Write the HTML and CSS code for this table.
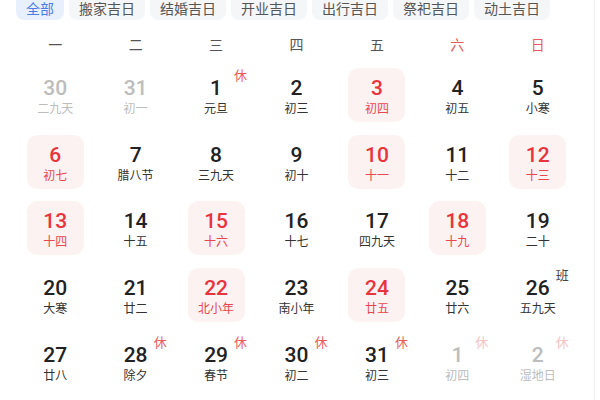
FILE: index.html
```html
<!DOCTYPE html>
<html lang="zh">
<head>
<meta charset="utf-8">
<link rel="stylesheet" href="styles.css">
</head>
<body>
<div class="panel">
  <div class="tabs">
    <span class="tab active">全部</span>
    <span class="tab">搬家吉日</span>
    <span class="tab">结婚吉日</span>
    <span class="tab">开业吉日</span>
    <span class="tab">出行吉日</span>
    <span class="tab">祭祀吉日</span>
    <span class="tab">动土吉日</span>
  </div>
  <div class="week">
    <span>一</span><span>二</span><span>三</span><span>四</span><span>五</span><span class="we">六</span><span class="we">日</span>
  </div>
  <div class="grid">
    <div class="cell other"><b>30</b><i>二九天</i></div>
    <div class="cell other"><b>31</b><i>初一</i></div>
    <div class="cell"><b>1</b><i>元旦</i><em class="rest">休</em></div>
    <div class="cell"><b>2</b><i>初三</i></div>
    <div class="cell hol"><b>3</b><i>初四</i></div>
    <div class="cell"><b>4</b><i>初五</i></div>
    <div class="cell"><b>5</b><i>小寒</i></div>

    <div class="cell hol"><b>6</b><i>初七</i></div>
    <div class="cell"><b>7</b><i>腊八节</i></div>
    <div class="cell"><b>8</b><i>三九天</i></div>
    <div class="cell"><b>9</b><i>初十</i></div>
    <div class="cell hol"><b>10</b><i>十一</i></div>
    <div class="cell"><b>11</b><i>十二</i></div>
    <div class="cell hol"><b>12</b><i>十三</i></div>

    <div class="cell hol"><b>13</b><i>十四</i></div>
    <div class="cell"><b>14</b><i>十五</i></div>
    <div class="cell hol"><b>15</b><i>十六</i></div>
    <div class="cell"><b>16</b><i>十七</i></div>
    <div class="cell"><b>17</b><i>四九天</i></div>
    <div class="cell hol"><b>18</b><i>十九</i></div>
    <div class="cell"><b>19</b><i>二十</i></div>

    <div class="cell"><b>20</b><i>大寒</i></div>
    <div class="cell"><b>21</b><i>廿二</i></div>
    <div class="cell hol"><b>22</b><i>北小年</i></div>
    <div class="cell"><b>23</b><i>南小年</i></div>
    <div class="cell hol"><b>24</b><i>廿五</i></div>
    <div class="cell"><b>25</b><i>廿六</i></div>
    <div class="cell"><b>26</b><i>五九天</i><em class="work">班</em></div>

    <div class="cell"><b>27</b><i>廿八</i></div>
    <div class="cell"><b>28</b><i>除夕</i><em class="rest">休</em></div>
    <div class="cell"><b>29</b><i>春节</i><em class="rest">休</em></div>
    <div class="cell"><b>30</b><i>初二</i><em class="rest">休</em></div>
    <div class="cell"><b>31</b><i>初三</i><em class="rest">休</em></div>
    <div class="cell other"><b>1</b><i>初四</i><em class="rest">休</em></div>
    <div class="cell other"><b>2</b><i>湿地日</i><em class="rest">休</em></div>
  </div>
</div>
</body>
</html>
```
FILE: styles.css
```css
html, body {
  margin: 0;
  padding: 0;
  background: #fff;
  overflow: hidden;
}
body {
  font-family: "Noto Sans CJK SC", "Noto Sans", sans-serif;
  width: 600px;
  height: 400px;
}
.panel {
  box-sizing: border-box;
  width: 595px;
  height: 400px;
  border-right: 1px solid #efefef;
  padding: 0 16px 0 15px;
}
.tabs {
  display: flex;
  gap: 5px;
  padding-left: 1px;
}
.tab {
  height: 20px;
  line-height: 17px;
  padding: 0 10px;
  border-radius: 0 0 8px 8px;
  background: #f5f6f8;
  color: #555;
  font-size: 14px;
  white-space: nowrap;
}
.tab.active {
  background: #e9f0fd;
  color: #4b7fe6;
}
.week {
  display: grid;
  grid-template-columns: repeat(7, 1fr);
  margin-top: 14px;
  height: 20px;
  line-height: 20px;
  font-size: 14px;
  color: #555;
  text-align: center;
}
.week .we {
  color: #e8595e;
}
.grid {
  display: grid;
  grid-template-columns: repeat(7, 1fr);
  row-gap: 12.7px;
  margin-top: 14px;
  justify-items: center;
}
.cell {
  position: relative;
  box-sizing: border-box;
  width: 57px;
  height: 54px;
  padding-top: 9px;
  border-radius: 10px;
  text-align: center;
}
.cell b {
  display: block;
  font-family: Roboto, "Noto Sans", sans-serif;
  font-weight: 500;
  font-size: 21px;
  line-height: 22px;
  color: #222;
}
.cell i {
  display: block;
  font-style: normal;
  font-size: 12px;
  line-height: 17px;
  color: #333;
}
.cell.hol {
  background: #fdf2f2;
}
.cell.hol b {
  color: #e8343c;
}
.cell.hol i {
  color: #e8474e;
}
.cell.other b,
.cell.other i {
  color: #bdbdbd;
}
.cell em {
  position: absolute;
  left: calc(50% + 18px);
  top: -2px;
  font-style: normal;
  font-size: 13px;
  line-height: 17px;
}
.cell em.rest {
  color: #ec5a5a;
}
.cell.other em.rest {
  color: #f6c3c3;
}
.cell em.work {
  color: #444;
}
```
